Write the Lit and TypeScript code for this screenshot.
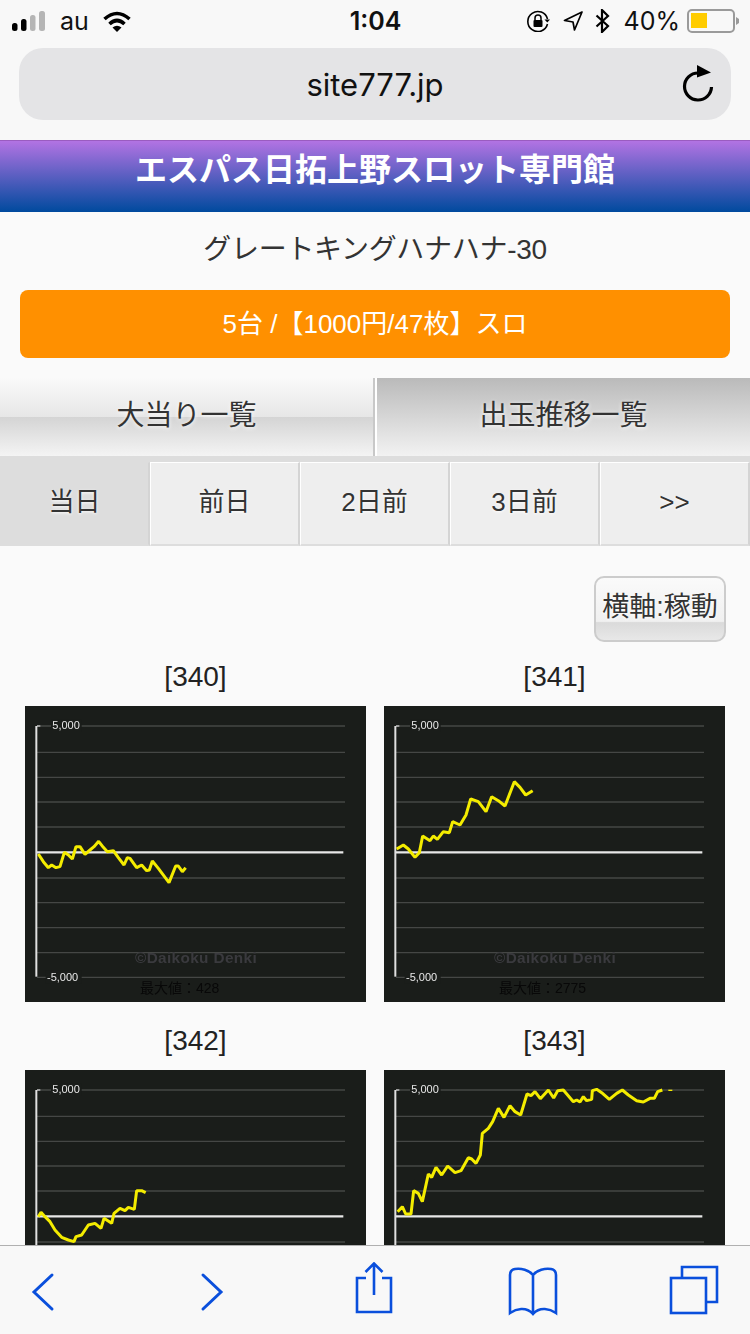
import { LitElement, html, css, svg } from 'lit';
import { customElement } from 'lit/decorators.js';

// traced lines, in 3x picture units with the image corner at (ox, oy)
const CHARTS = [
  {
    id: 340, max: 428, ox: 15, oy: 18,
    line: '55,462 70,485 85,503 95,495 108,503 120,500 133,457 145,465 157,477 168,440 180,440 195,463 210,450 222,440 236,424 250,442 262,455 280,452 295,473 312,495 322,473 330,475 350,503 365,495 380,512 388,510 397,483 415,505 447,548 467,498 475,498 487,515 497,503',
  },
  {
    id: 341, max: 2775, ox: 12, oy: 18,
    line: '50,447 70,435 85,447 105,472 118,458 128,408 150,422 160,408 172,418 190,395 208,398 218,365 240,375 258,345 272,297 295,305 318,335 335,290 355,302 375,318 403,245 420,262 437,285 458,272',
  },
  {
    id: 342, max: 1203, ox: 75, oy: 30,
    line: '115,470 123,457 135,470 150,485 165,510 185,532 205,540 222,545 228,530 245,525 265,495 285,490 303,505 312,475 335,490 342,460 360,445 375,452 385,442 403,448 410,392 425,392 437,398',
  },
  {
    id: 343, max: 5102, ox: 27, oy: 30,
    line: '68,455 82,440 92,462 108,462 116,392 130,400 142,425 160,342 170,352 183,322 200,345 218,318 240,338 258,332 280,293 290,297 303,310 316,285 322,220 340,205 353,185 370,145 387,172 405,137 420,155 437,165 456,102 468,107 480,95 496,116 520,90 536,114 548,92 565,90 595,125 605,120 615,126 625,110 635,122 650,118 652,92 665,88 680,98 703,118 725,100 742,90 760,105 785,122 805,126 825,115 838,115 848,95 862,90',
  },
];

const GRID_Y = [60, 139, 214, 288, 363, 516, 590, 665, 740, 814];

@customElement('app-root')
export class AppRoot extends LitElement {
  static styles = css`
    :host {
      display: block;
      position: relative;
      width: 750px;
      height: 1334px;
      overflow: hidden;
      background: #fafafa;
      color: #333;
      font-family: 'Liberation Sans', 'Noto Sans CJK JP', sans-serif;
    }

    .browser {
      height: 140px;
      background: #f8f8f8;
      display: flex;
      flex-direction: column;
    }

    .status {
      height: 48px;
      display: flex;
      align-items: center;
      padding: 0 11px 6px 12px;
      box-sizing: border-box;
      font-family: Inter, sans-serif;
      font-size: 25px;
      color: #111;
    }

    .status-left,
    .status-right {
      flex: 1;
      display: flex;
      align-items: center;
    }

    .status-right {
      justify-content: flex-end;
    }

    .carrier {
      margin: 0 14px 0 14px;
    }

    .time {
      font-weight: 600;
      font-size: 25px;
    }

    .pct {
      margin: 0 7px 0 14px;
    }

    .lock {
      margin-right: 13px;
    }

    .arrow {
      margin-right: 12px;
    }

    .battery {
      display: block;
    }

    .url {
      margin: 0 19px;
      height: 72px;
      border-radius: 24px;
      background: #e4e4e6;
      display: grid;
      grid-template-columns: 1fr auto 1fr;
      align-items: center;
      font-family: Inter, sans-serif;
      font-size: 31px;
      color: #111;
    }

    .reload {
      grid-column: 3;
      justify-self: end;
      margin-right: 17px;
      display: block;
    }

    .url span {
      grid-column: 2;
    }

    .title {
      height: 72px;
      box-sizing: border-box;
      border-top: 1px solid #9a5cc0;
      background: linear-gradient(#b273e3, #004a9e);
      color: #fff;
      font-size: 32px;
      font-weight: 700;
      line-height: 58px;
      text-align: center;
    }

    .model {
      height: 78px;
      line-height: 76px;
      text-align: center;
      font-size: 28px;
      letter-spacing: -0.3px;
    }

    .info {
      margin: 0 20px;
      height: 68px;
      border-radius: 8px;
      background: #ff9000;
      color: #fff;
      font-size: 26px;
      line-height: 68px;
      text-align: center;
    }

    .tabs {
      margin-top: 20px;
      display: grid;
      grid-template-columns: 375px 375px;
      height: 84px;
      background: #ddd;
    }

    .tab {
      height: 78px;
      line-height: 76px;
      text-align: center;
      font-size: 28px;
      text-shadow: 0 1px 4px #fff;
    }

    .tab.off {
      box-sizing: border-box;
      border-right: 2px solid #c8c8c8;
      background: linear-gradient(#fafafa, #e6e6e6 50%, #d4d4d4 50%, #f4f4f4);
    }

    .tab.on {
      box-sizing: border-box;
      border-left: 2px solid #fff;
      background: linear-gradient(#bababa, #f2f2f2);
    }

    .days {
      display: grid;
      grid-template-columns: repeat(5, 150px);
    }

    .day {
      height: 84px;
      box-sizing: border-box;
      background: #eee;
      border-top: 1px solid #fff;
      border-left: 1px solid #fff;
      border-right: 2px solid #d4d4d4;
      border-bottom: 2px solid #ddd;
      line-height: 78px;
      text-align: center;
      font-size: 26px;
      text-shadow: 0 1px 3px #fff;
    }

    .day.active {
      background: #ddd;
      border-top-color: #ddd;
      border-left-color: #ddd;
    }

    .tools {
      display: flex;
      justify-content: flex-end;
      padding: 30px 24px 18px 0;
    }

    .axis {
      width: 132px;
      height: 66px;
      box-sizing: border-box;
      border: 2px solid #ccc;
      border-radius: 10px;
      background: linear-gradient(#fafafa, #f0f0f0 70%, #dadada 72%, #e8e8e8);
      font-size: 27px;
      line-height: 58px;
      text-align: center;
      white-space: nowrap;
      text-shadow: 0 1px 3px #fff;
    }

    .charts {
      display: grid;
      grid-template-columns: 341px 341px;
      column-gap: 18px;
      row-gap: 22px;
      padding: 0 25px;
    }

    .label {
      height: 34px;
      line-height: 34px;
      margin-bottom: 12px;
      text-align: center;
      font-size: 28px;
      color: #222;
    }

    .chart {
      width: 341px;
      height: 296px;
      background: #1a1d1a;
      overflow: hidden;
    }

    .chart svg {
      display: block;
      filter: blur(0.45px);
    }

    .scale {
      fill: #e8e8e8;
      font-size: 33px;
    }

    .brand {
      fill: #3a3a3e;
      font-size: 46px;
      font-weight: 700;
    }

    .max {
      fill: #080808;
      font-size: 42px;
    }

    .toolbar {
      position: absolute;
      left: 0;
      right: 0;
      bottom: 0;
      height: 89px;
      box-sizing: border-box;
      border-top: 1px solid #b0b0b0;
      background: #f8f8f8;
      padding: 16px 20px 0 0;
      display: grid;
      grid-template-columns: 86px 252px 72px 248px 72px;
      justify-items: center;
      align-items: start;
    }

    .toolbar svg {
      display: block;
      fill: none;
      stroke: #0a4fdc;
      stroke-width: 2.6;
    }
  `;

  private _chart(c: (typeof CHARTS)[number]) {
    return html`
      <div>
        <div class="label">[${c.id}]</div>
        <div class="chart">
          <svg width="341" height="296" viewBox="0 0 1023 888">
            ${GRID_Y.map(
              (y) => svg`<line x1="36" x2="960" y1=${y} y2=${y} stroke="#454745" stroke-width="4"></line>`
            )}
            <rect x="78" y="40" width="92" height="38" fill="#1a1d1a"></rect>
            <rect x="62" y="794" width="108" height="38" fill="#1a1d1a"></rect>
            <line x1="36" x2="46" y1="60" y2="60" stroke="#ccc" stroke-width="4"></line>
            <line x1="34" x2="955" y1="439" y2="439" stroke="#e8e8e8" stroke-width="7"></line>
            <line x1="34" x2="34" y1="60" y2="812" stroke="#e0e0e0" stroke-width="6"></line>
            <text class="scale" x="82" y="70">5,000</text>
            <text class="scale" x="66" y="824">-5,000</text>
            <text class="brand" x="330" y="771" textLength="365">©Daikoku Denki</text>
            <text class="max" x="345" y="860">最大値：${c.max}</text>
            <polyline
              transform="translate(${-c.ox} ${-c.oy})"
              points=${c.line}
              fill="none"
              stroke="#f4ec00"
              stroke-width="9"
              stroke-linejoin="bevel"
            ></polyline>
            ${c.id === 343
              ? svg`<line x1="853" x2="865" y1="61" y2="61" stroke="#f4ec00" stroke-width="4"></line>`
              : ''}
          </svg>
        </div>
      </div>
    `;
  }

  render() {
    return html`
      <div class="browser">
        <div class="status">
          <div class="status-left">
            <svg width="34" height="22" viewBox="0 0 34 22">
              <rect x="0" y="13" width="5.5" height="8" rx="2.5" fill="#000"></rect>
              <rect x="9" y="9" width="5.5" height="12" rx="2.5" fill="#000"></rect>
              <rect x="18" y="5" width="5.5" height="16" rx="2.5" fill="#b5b5b5"></rect>
              <rect x="27" y="1" width="6" height="20" rx="2.5" fill="#b5b5b5"></rect>
            </svg>
            <span class="carrier">au</span>
            <svg width="28" height="21" viewBox="0 0 28 21">
              <path d="M1.5 8 Q14 -3 26.5 8" fill="none" stroke="#000" stroke-width="3.6"></path>
              <path d="M6.5 13 Q14 6 21.5 13" fill="none" stroke="#000" stroke-width="3.6"></path>
              <path d="M9.5 16.5 Q14 13 18.5 16.5 L14 21 Z" fill="#000"></path>
            </svg>
          </div>
          <div class="time">1:04</div>
          <div class="status-right">
            <svg class="lock" width="23" height="22" viewBox="0 0 23 22">
              <path d="M20.5 9 A10 10 0 1 0 20.5 14" fill="none" stroke="#000" stroke-width="1.6"></path>
              <path d="M17.5 9.5 H23 L20.3 12.6 Z" fill="#000"></path>
              <rect x="6.5" y="10" width="9" height="7" rx="1" fill="#000"></rect>
              <path d="M8 10 V8 A3 3 0 0 1 14 8 V10" fill="none" stroke="#000" stroke-width="1.5"></path>
            </svg>
            <svg class="arrow" width="20" height="20" viewBox="0 0 20 20">
              <path d="M19 1 L1.5 9.5 L10 11 L11.5 19 Z" fill="none" stroke="#000" stroke-width="1.7" stroke-linejoin="round"></path>
            </svg>
            <svg width="15" height="24" viewBox="0 0 15 24">
              <path d="M1.5 6.5 L13 17 L7 23 V1 L13 7 L1.5 17.5" fill="none" stroke="#000" stroke-width="2.2"></path>
            </svg>
            <span class="pct">40%</span>
            <svg class="battery" width="52" height="24" viewBox="0 0 52 24">
              <rect x="1" y="1" width="46" height="22" rx="4" fill="none" stroke="#9a9a9a" stroke-width="2"></rect>
              <rect x="4" y="4" width="16" height="15" fill="#ffcc00"></rect>
              <path d="M49 8 L52 10 V14 L49 16 Z" fill="#9a9a9a"></path>
            </svg>
          </div>
        </div>
        <div class="url">
          <span>site777.jp</span>
          <svg class="reload" width="32" height="38" viewBox="0 0 32 38">
            <path d="M16 8 A13.5 13.5 0 1 0 29.5 22" fill="none" stroke="#000" stroke-width="3.2"></path>
            <path d="M15 0 L29 7.5 L15 12.5 Z" fill="#000"></path>
          </svg>
        </div>
      </div>

      <div class="title">エスパス日拓上野スロット専門館</div>
      <div class="model">グレートキングハナハナ-30</div>
      <div class="info">5台 /【1000円/47枚】スロ</div>

      <div class="tabs">
        <div class="tab off">大当り一覧</div>
        <div class="tab on">出玉推移一覧</div>
      </div>

      <div class="days">
        <div class="day active">当日</div>
        <div class="day">前日</div>
        <div class="day">2日前</div>
        <div class="day">3日前</div>
        <div class="day">&gt;&gt;</div>
      </div>

      <div class="tools"><div class="axis">横軸:稼動</div></div>

      <div class="charts">${CHARTS.map((c) => this._chart(c))}</div>

      <div class="toolbar">
        <svg width="24" height="56" viewBox="0 0 24 56">
          <path d="M21 13 L3 30 L21 47" stroke-linecap="round" style="stroke-width:3"></path>
        </svg>
        <svg width="24" height="56" viewBox="0 0 24 56">
          <path d="M3 13 L21 30 L3 47" stroke-linecap="round" style="stroke-width:3"></path>
        </svg>
        <svg width="44" height="56" viewBox="0 0 44 56">
          <path d="M14 16 H5 V50 H39 V16 H30"></path>
          <path d="M22 33 V2 M13.5 10 L22 1.5 L30.5 10"></path>
        </svg>
        <svg width="52" height="56" viewBox="0 0 52 56">
          <path d="M25 13 C21 8 13 6 7 7 C4 7.5 2 9.5 2 13 V51 C8 47 18 44 25 52 C32 44 42 47 48 51 V13 C48 9.5 46 7.5 43 7 C37 6 29 8 25 13 Z M25 13 V52"></path>
        </svg>
        <svg width="54" height="56" viewBox="0 0 54 56">
          <rect x="4" y="16" width="35" height="35"></rect>
          <path d="M15 15 V5 H50 V40 H40"></path>
        </svg>
      </div>
    `;
  }
}
